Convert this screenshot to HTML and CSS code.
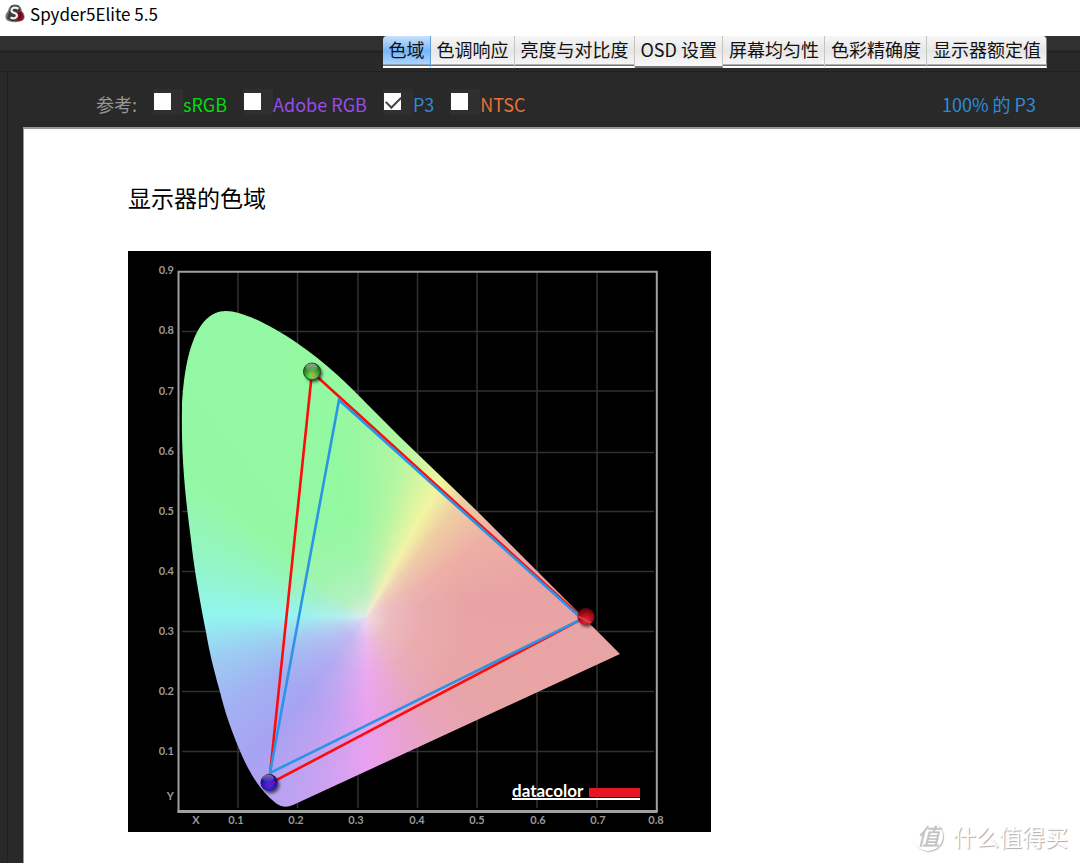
FILE: index.html
```html
<!DOCTYPE html>
<html lang="zh-CN">
<head>
<meta charset="utf-8">
<title>Spyder5Elite 5.5</title>
<link rel="stylesheet" href="styles.css">
</head>
<body>
<header class="titlebar">
  <svg class="app-icon" viewBox="0 0 20 20" aria-hidden="true">
    <path d="M6 1.500 Q10 -.5 14 1.500 Q16 3 17 7 Q20 10 19.500 14 Q18.500 17 15 17.500 Q10 19 5 17.500 Q1 17 .5 13.500 Q0 10 3 7 Q4 3 6 1.500Z" fill="#777"/>
    <path d="M6 2 Q10 .5 14 2 L16 8 L18 14 L14 17 H6 L2 14 L4 8Z" fill="#3d3d3f"/>
    <path d="M12 8 L17 8 L19 13 Q18 17 13 17 L11 14Z" fill="#8c1022"/>
    <path d="M13.500 4.800 Q9.500 2.500 7 4.800 Q5.500 7.500 8.500 8.700 Q12.500 9.500 11.800 12.500 Q10 15.500 5.500 13.500" fill="none" stroke="#f1f1f1" stroke-width="2.200"/>
    <path d="M13.500 9.500 H15.500 Q17 12 14 12.500 Q17 13.500 14 15" fill="none" stroke="#35070d" stroke-width="1"/>
  </svg>
  <h1 class="app-name">Spyder5Elite 5.5</h1>
</header>

<nav class="toolbar">
  <div class="tabs">
    <button class="tab active" type="button">色域</button>
    <button class="tab" type="button">色调响应</button>
    <button class="tab" type="button">亮度与对比度</button>
    <button class="tab raised" type="button">OSD 设置</button>
    <button class="tab" type="button">屏幕均匀性</button>
    <button class="tab" type="button">色彩精确度</button>
    <button class="tab" type="button">显示器额定值</button>
  </div>
</nav>

<main class="workspace">
  <div class="reference">
    <span class="caption">参考:</span>
    <label class="option srgb"><span class="box"><input type="checkbox"></span>sRGB</label>
    <label class="option adobe"><span class="box"><input type="checkbox"></span>Adobe RGB</label>
    <label class="option p3"><span class="box"><input type="checkbox" checked></span>P3</label>
    <label class="option ntsc"><span class="box"><input type="checkbox"></span>NTSC</label>
    <output class="coverage">100% 的 P3</output>
  </div>

  <section class="report">
    <h2 class="heading">显示器的色域</h2>
    <svg class="chart" viewBox="128 251 583 581" role="img" aria-label="显示器的色域">
      <defs>
        <clipPath id="locus">
          <path d="M226 311 C242 311 271 325 297 343 C326 363 347 383 370 407 L400 437 L477 511 L620 654 L293 805 Q284 809 277 804 C260 792 248 770 240 751 C230 727 225 712 220 692 C213 667 209 650 206 632 C198 590 194 567 191 540 C185 495 181 455 182 407 C184 362 194 311 226 311Z"/>
        </clipPath>
        <radialGradient id="green" cx=".5" cy=".75" r=".75"><stop offset="0" stop-color="#7cf05c"/><stop offset=".5" stop-color="#3d9e33"/><stop offset="1" stop-color="#153f16"/></radialGradient>
        <radialGradient id="blue" cx=".5" cy=".65" r=".7"><stop offset="0" stop-color="#4a35f0"/><stop offset=".5" stop-color="#2c16b0"/><stop offset="1" stop-color="#0a0645"/></radialGradient>
        <radialGradient id="red" cx=".5" cy=".75" r=".8"><stop offset="0" stop-color="#e52a36"/><stop offset=".5" stop-color="#b00d18"/><stop offset="1" stop-color="#430207"/></radialGradient>
        <linearGradient id="shine" x2="0" y2="1"><stop offset="0" stop-color="#fff" stop-opacity=".55"/><stop offset="1" stop-color="#fff" stop-opacity="0"/></linearGradient>
        <filter id="soft" x="-50%" y="-50%" width="200%" height="200%"><feGaussianBlur stdDeviation="1.500"/></filter>
      </defs>
      <rect x="128" y="251" width="583" height="581" fill="#000"/>
      <path class="grid" d="M238 272V808M297.500 272V808M358 272V808M417.500 272V808M477 272V808M537 272V808M597 272V808M182 331.500H654M182 391H654M182 452.500H654M182 511.500H654M182 571.500H654M182 631.500H654M182 691.500H654M182 751.500H654"/>
      <foreignObject x="128" y="251" width="583" height="581" clip-path="url(#locus)"><div class="spectrum"></div></foreignObject>
      <path class="frame" d="M178.500 812V271.800H656.800V812"/>
      <path class="axis" d="M177.500 811.500H657.500"/>

      <path d="M312 372L583 618.500L269 784Z" fill="none" stroke="#fe0b0b" stroke-width="2.600"/>
      <path d="M339 400L582 619L270 773Z" fill="none" stroke="#2c94e8" stroke-width="2.600"/>

      <g>
        <circle cx="314" cy="374" r="8.500" fill="#000" opacity=".6" filter="url(#soft)"/>
        <circle cx="312" cy="371.500" r="8.500" fill="url(#green)" stroke="#1c481c"/>
        <ellipse cx="311.500" cy="367.500" rx="6" ry="4" fill="url(#shine)"/>
        <path d="M312 371L317 377H311Z" fill="#ba9a3c" opacity=".7"/>
      </g>
      <g>
        <circle cx="271" cy="785" r="8.500" fill="#000" opacity=".6" filter="url(#soft)"/>
        <circle cx="269" cy="782.500" r="8.500" fill="url(#blue)"/>
        <ellipse cx="268" cy="778.500" rx="6" ry="4" fill="url(#shine)" opacity=".8"/>
        <path d="M265 786L275 782" stroke="#770bbd" stroke-width="2"/>
      </g>
      <g>
        <circle cx="587" cy="619" r="8" fill="#000" opacity=".6" filter="url(#soft)"/>
        <circle cx="586" cy="616.500" r="8.500" fill="url(#red)"/>
        <path d="M578 616L591 623" stroke="#e64f60" stroke-width="1.500" opacity=".7"/>
      </g>

      <g class="ticks">
        <text x="174" y="274">0.9</text><text x="174" y="334">0.8</text><text x="174" y="395">0.7</text>
        <text x="174" y="455">0.6</text><text x="174" y="515">0.5</text><text x="174" y="575">0.4</text>
        <text x="174" y="635">0.3</text><text x="174" y="695">0.2</text><text x="174" y="755">0.1</text>
        <text x="174" y="800">Y</text>
      </g>
      <g class="ticks below">
        <text x="196" y="824">X</text><text x="236" y="824">0.1</text><text x="296" y="824">0.2</text>
        <text x="356" y="824">0.3</text><text x="417" y="824">0.4</text><text x="477" y="824">0.5</text>
        <text x="538" y="824">0.6</text><text x="598" y="824">0.7</text><text x="656" y="824">0.8</text>
      </g>
      <text class="brand" x="512" y="797">datacolor</text>
      <rect x="589" y="788" width="51" height="9" fill="#e81525"/>
      <rect x="512" y="798" width="128" height="2" fill="#fff"/>
    </svg>
  </section>
</main>

<div class="watermark"><span class="seal">值</span><span>什么值得买</span></div>
</body>
</html>
```
FILE: styles.css
```css
* { box-sizing: border-box; }

body {
  margin: 0;
  min-height: 100vh;
  display: flex;
  flex-direction: column;
  position: relative;
  background: #292929;
  color: #000;
  font-family: "Noto Sans CJK SC", "Noto Sans", sans-serif;
  font-size: 18px;
  line-height: 26px;
}

.titlebar {
  display: flex;
  align-items: center;
  gap: 5px;
  height: 36px;
  padding: 0 5px 9px;
  background: #fff;
}
.app-icon { width: 20px; height: 20px; }
.app-name { margin: 0; font-size: 17px; font-weight: 400; }

.toolbar {
  display: flex;
  justify-content: flex-end;
  height: 36px;
  padding-right: 33px;
  border-bottom: 1px solid #202020;
  background: linear-gradient(#303030 14px, #212121 15px, #292929 18px);
}
.tabs { display: flex; height: 32px; }
.tab {
  height: 32px;
  padding: 0 5px 5px 6px;
  border: 0;
  border-right: 1px solid #c4c4c4;
  border-bottom: 2px solid #fff;
  background: linear-gradient(#f7f7f7, #e6e6e6 50%, #f6f6f6 28px, #707070 29px);
  color: #111;
  font: inherit;
  line-height: 26px;
  white-space: nowrap;
}
.tab.active {
  border-right-color: #5b9fe0;
  border-radius: 4px 0 0 0;
  background: linear-gradient(#c9e2fb, #78b5f6 50%, #a9d4ff 28px, #707070 29px);
}
.tab.raised { border-bottom-color: #777; background: linear-gradient(#f7f7f7, #e8e8e8 50%, #fafafa); }
.tab:last-child { border-right-color: #888; border-radius: 0 4px 0 0; }

.workspace {
  flex: 1;
  display: flex;
  flex-direction: column;
  margin-left: 7px;
  border-left: 1px solid #202020;
}
.reference {
  display: flex;
  align-items: center;
  gap: 16px;
  height: 55px;
  padding: 9px 44px 0 88px;
}
.caption { color: #969696; }
.option { display: flex; align-items: center; }
.box {
  width: 30px;
  height: 26px;
  padding: 4px 1px;
  margin-bottom: 4px;
  background: #2f2f2f;
}
.box input {
  appearance: none;
  display: block;
  width: 17px;
  height: 17px;
  margin: 0;
  background: #fff;
}
.box input:checked::before {
  content: "";
  display: block;
  width: 13px;
  height: 7px;
  margin: 3px 2px;
  border-left: 2px solid #444;
  border-bottom: 2px solid #444;
  transform: rotate(-45deg);
}
.srgb { color: #00df0a; }
.adobe { color: #9a4be8; }
.p3, .coverage { color: #2c8cda; }
.ntsc { color: #e5713a; }
.coverage { margin-left: auto; }

.report {
  flex: 1;
  margin-left: 15px;
  padding: 52px 24px 31px 104px;
  border-top: 2px solid #999;
  border-left: 1px solid #999;
  background: #fff;
}
.heading { margin: 0 0 38px; font-size: 23px; font-weight: 400; line-height: 32px; }

.chart { display: block; width: 100%; max-width: 583px; height: auto; }
.grid { fill: none; stroke: #303030; stroke-width: 1.5; }
.frame { fill: none; stroke: #a0a0a0; stroke-width: 2; }
.axis { fill: none; stroke: #a0a0a0; stroke-width: 3; }
.spectrum {
  height: 581px;
  background:
    radial-gradient(circle at 238px 366px, rgba(242, 232, 242, .8), rgba(242, 228, 240, .35) 24px, rgba(240, 220, 235, .14) 55px, rgba(240, 220, 235, 0) 100px),
    conic-gradient(from 0deg at 238px 366px,
      #9df7a2 0deg, #b4f6a1 12deg, #f2f5a2 29deg, #efcca3 40deg, #edaea5 58deg,
      #e8a4a4 80deg, #e8a5a5 120deg, #e8a4b8 148deg, #e8a2d6 166deg, #eaa1ef 179deg,
      #c5a2f1 198deg, #a7a2f2 218deg, #a2b2f2 238deg, #9dcaf2 254deg, #92f5f0 271deg,
      #93f5c6 289deg, #93f8a5 309deg, #93f9a1 350deg, #9df7a2 360deg);
}
.ticks { fill: #999; font-family: Lato, sans-serif; font-size: 11px; font-weight: 700; text-anchor: end; }
.below { text-anchor: middle; }
.brand { fill: #fff; font-family: Lato, sans-serif; font-size: 17px; font-weight: 700; }

.watermark {
  position: absolute;
  right: 12px;
  bottom: 11px;
  display: flex;
  align-items: center;
  gap: 10px;
  color: #fff;
  font-size: 23px;
  line-height: 32px;
  text-shadow: 1px 1px 1px #aaa;
}
.seal {
  width: 30px;
  height: 30px;
  border-radius: 50%;
  box-shadow: 1px 1px 1px #bbb;
  color: #c4c4c4;
  font-style: italic;
  font-weight: 500;
  line-height: 28px;
  text-align: center;
  text-shadow: none;
}
```
